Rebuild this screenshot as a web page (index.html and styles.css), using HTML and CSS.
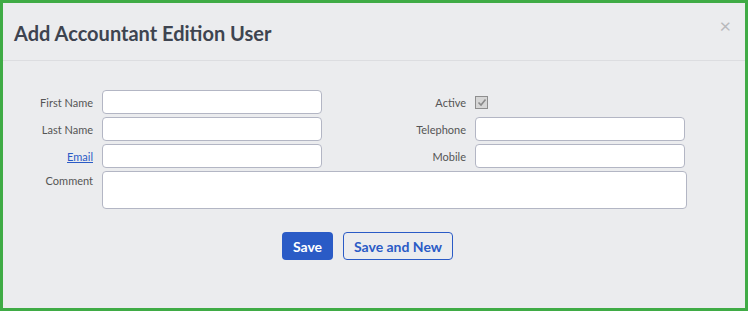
FILE: index.html
```html
<!DOCTYPE html>
<html lang="en">
<head>
  <meta charset="UTF-8" />
  <title>Add Accountant Edition User</title>
  <link rel="stylesheet" href="styles.css">
</head>
<body>

  <div class="modal">
    <div class="modal-header">
      <h1>Add Accountant Edition User</h1>
      <span class="cerrar">&times;</span>
    </div>

    <div class="modal-body">
      <div class="form-grid">
        <label>First Name</label>
        <input type="text">
        <label>Active</label>
        <div class="check-celda"><span class="check">
          <svg width="10" height="9" viewBox="0 0 10 9"><path d="M1.5 4.5 L4 7 L8.5 1.5" fill="none" stroke="#8a8a8a" stroke-width="1.6"/></svg>
        </span></div>

        <label>Last Name</label>
        <input type="text">
        <label>Telephone</label>
        <input type="text">

        <label><a href="#">Email</a></label>
        <input type="text">
        <label>Mobile</label>
        <input type="text">

        <label class="arriba">Comment</label>
        <textarea class="comentario"></textarea>
      </div>

      <div class="botones">
        <button class="btn-guardar">Save</button>
        <button class="btn-nuevo">Save and New</button>
      </div>
    </div>
  </div>

</body>
</html>
```

FILE: styles.css
```css
html, body {
  margin: 0;
  height: 100%;
}

body {
  font-family: Lato, 'Open Sans', sans-serif;
  background: #ebecee;
  color: #555;
}

.modal {
  box-sizing: border-box;
  height: 311px;
  border: 3px solid #3fab45;
  background: #ebecee;
}

.modal-header {
  display: flex;
  justify-content: space-between;
  align-items: flex-start;
  height: 57px;
  padding: 0 14px 0 11px;
  border-bottom: 1px solid #dcdde0;
}

.modal-header h1 {
  margin: 16px 0 0;
  font-size: 20px;
  font-weight: 700;
  color: #3e4450;
  line-height: 28px;
}

.cerrar {
  margin-top: 12px;
  font-size: 20px;
  line-height: 20px;
  color: #b8b9bc;
}

.modal-body {
  padding-top: 29px;
}

.form-grid {
  display: grid;
  grid-template-columns: 90px 220px 135px 210px;
  grid-auto-rows: 24px;
  column-gap: 9px;
  row-gap: 3px;
}

.form-grid label {
  font-size: 11px;
  text-align: right;
  align-self: center;
}

.form-grid label.arriba {
  align-self: start;
  padding-top: 3px;
}

.form-grid a {
  color: #2a5bc6;
}

input, textarea {
  box-sizing: border-box;
  margin: 0;
  border: 1px solid #b3b6c4;
  border-radius: 4px;
  background: #fff;
  font-family: inherit;
  height: 24px;
}

.comentario {
  grid-column: 2 / 5;
  width: 585px;
  height: 38px;
  resize: none;
}

.check-celda {
  display: flex;
  align-items: center;
}

.check {
  display: flex;
  align-items: center;
  justify-content: center;
  box-sizing: border-box;
  width: 13px;
  height: 13px;
  border: 1px solid #8e8e8e;
  background: #d6d6d6;
}

.botones {
  display: flex;
  justify-content: center;
  gap: 10px;
  margin: 37px 0 0 -13px;
}

button {
  height: 28px;
  padding: 0;
  border-radius: 4px;
  font-family: inherit;
  font-size: 14px;
  font-weight: 700;
  cursor: pointer;
}

.btn-guardar {
  width: 51px;
  background: #2a5bc6;
  color: #fff;
  border: none;
}

.btn-nuevo {
  width: 110px;
  background: transparent;
  color: #2a5bc6;
  border: 1px solid #2a5bc6;
}
```
